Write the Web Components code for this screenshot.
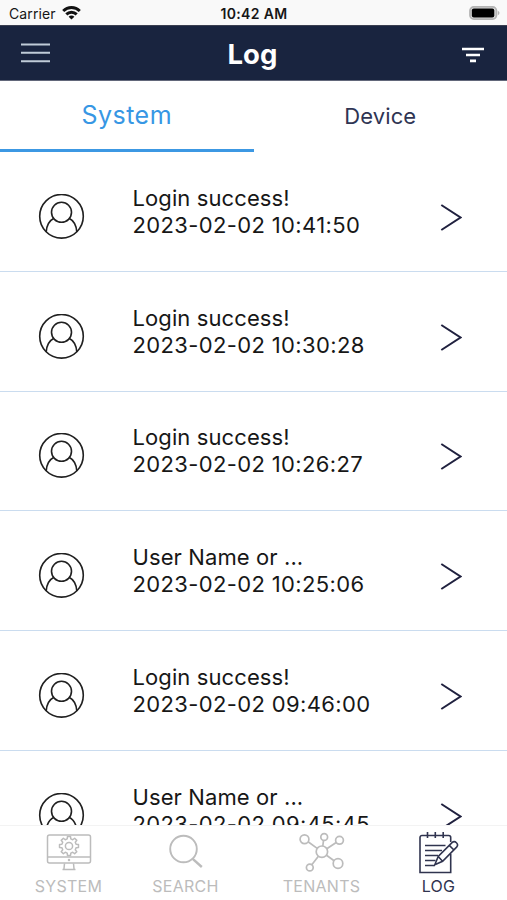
<!DOCTYPE html>
<html lang="en">
<head>
<meta charset="utf-8">
<title>Log</title>
<style>
html, body { margin: 0; height: 100%; overflow: hidden; background: #fff; font-family: Inter, "Liberation Sans", sans-serif; }
</style>
</head>
<body>
<log-app></log-app>
<script>
const define = (name, html, init) => customElements.define(name, class extends HTMLElement {
  constructor() {
    super();
    this.attachShadow({ mode: 'open' }).innerHTML = html;
  }
  connectedCallback() { if (init) init(this, this.shadowRoot); }
});

define('status-bar', `
<style>
:host { display: grid; grid-template-columns: 1fr auto 1fr; align-items: center; height: 25px; box-sizing: border-box; padding: 2px 7px 0 9px; background: #f9f9f9; color: #161616; font-size: 14px; line-height: 20px; }
.left { display: flex; align-items: center; gap: 6px; letter-spacing: .1px; }
.left svg { margin-top: -2px; }
.time { font-weight: 600; font-size: 14px; letter-spacing: .35px; margin-right: 1px; }
.right { display: flex; justify-content: flex-end; margin-top: -2px; }
svg { display: block; }
</style>
<div class="left"><span>Carrier</span>
<svg width="19" height="14" viewBox="0 0 19 14" fill="none" stroke="#111" stroke-width="2.900"><path d="M1.2 5C5.8.4 13.200.4 17.800 5"/><path d="M4.300 8.400c2.900-2.900 7.500-2.900 10.400 0"/><path d="M9.500 13.600 6.600 10.700c1.600-1.500 4.200-1.500 5.800 0z" fill="#111" stroke="none"/></svg></div>
<div class="time">10:42 AM</div>
<div class="right"><svg width="31" height="14" viewBox="0 0 31 14"><rect x="1" y=".9" width="26.400" height="12.200" rx="3.800" fill="#ddd" stroke="#b4b4b4" stroke-width="1.800"/><rect x="2.800" y="2.400" width="22.500" height="9.200" rx="2" fill="#000"/><path d="M28.800 4.800c2.200.8 2.200 3.600 0 4.400z" fill="#b4b4b4"/></svg></div>`);

define('nav-header', `
<style>
:host { display: grid; grid-template-columns: 1fr auto 1fr; align-items: center; height: 56px; box-sizing: border-box; padding: 0 23px 0 21px; background: #19243f; border-top: 1px solid #3a3f50; border-bottom: 1px solid #62677a; color: #fff; }
h1 { margin: 2px 0 0; font-size: 27.500px; line-height: 34px; font-weight: 700; letter-spacing: .1px; }
svg { display: block; }
.menu { margin-top: -1px; }
.filter { justify-self: end; margin-top: 4px; }
</style>
<svg class="menu" width="29" height="20" viewBox="0 0 29 20" stroke="#c0cbd8" stroke-width="1.900"><path d="M0 1.500h29M0 9.800h29M0 18.200h29"/></svg>
<h1><slot></slot></h1>
<svg class="filter" width="22" height="16" viewBox="0 0 22 16" stroke="#fff" stroke-width="2.700"><path d="M0 2h22M4 8h14M8 13.800h6"/></svg>`);

define('log-tab', `
<style>
:host { display: flex; flex: 1; box-sizing: border-box; height: 71px; justify-content: center; align-items: center; border-bottom: 3px solid transparent; font-size: 22px; color: #2f3453; letter-spacing: .1px; }
:host([active]) { border-color: #3c98e3; color: #3797e4; font-size: 25px; letter-spacing: .5px; }
span { line-height: 30px; padding-top: 2px; }
:host([active]) span { padding-top: 0; }
</style><span><slot></slot></span>`);

define('log-row', `
<style>
:host { display: grid; grid-template-columns: 132.500px 1fr 67px; height: 119.800px; flex: none; box-sizing: border-box; align-items: start; border-bottom: 1.500px solid #cadcef; color: #171717; }
.avatar { margin: 41.800px 0 0 38px; }
.text { padding-top: 32.800px; font-size: 22px; line-height: 27px; white-space: nowrap; }
.msg { letter-spacing: .1px; }
.when { letter-spacing: .36px; }
.arrow { margin-top: 51.800px; }
svg { display: block; }
</style>
<svg class="avatar" width="47" height="47" viewBox="0 0 47 47" fill="none" stroke="#202020" stroke-width="1.600"><circle cx="23.500" cy="22.300" r="21.800"/><circle cx="23.500" cy="18.300" r="10"/><path d="M8.200 38c.4-6.500 3-11.400 7.800-13.800M38.800 38c-.4-6.500-3-11.400-7.800-13.800"/></svg>
<div class="text"><div class="msg"></div><div class="when"></div></div>
<svg class="arrow" width="22" height="28" viewBox="0 0 22 28" fill="none" stroke="#20213f" stroke-width="2"><path d="M1.300 1 20.500 13.500 1.300 26"/></svg>`,
(el, root) => {
  root.querySelector('.msg').textContent = el.getAttribute('message');
  root.querySelector('.when').textContent = el.getAttribute('time');
});

define('nav-item', `
<style>
:host { display: flex; flex-direction: column; align-items: center; width: 117px; color: #bcbcbc; font-size: 16px; line-height: 20px; letter-spacing: .25px; }
:host([active]) { color: #30344f; }
.icon { height: 44px; display: flex; align-items: flex-start; padding-top: 6px; }
</style>
<div class="icon"><slot name="icon"></slot></div><div class="label"><slot></slot></div>`);

define('bottom-nav', `
<style>
:host { display: grid; grid-template-columns: 137px 97px 175px 59px; height: 75px; box-sizing: border-box; background: #fff; border-top: 1px solid #f3f3f3; justify-content: start; justify-items: center; }
svg { display: block; fill: none; stroke: currentColor; }
</style>
<nav-item><svg slot="icon" width="46" height="40" viewBox="0 0 46 40" stroke-width="1.500"><rect x="1.500" y="3" width="43" height="28" rx="2"/><path d="M1.500 25h43M18.500 31.500l-.6 6M27.500 31.500l.6 6M16.500 37.500h13"/><path id="gear" stroke-linejoin="round"/><circle cx="23" cy="14" r="3.600"/><circle cx="23" cy="28" r=".5"/></svg>SYSTEM</nav-item>
<nav-item><svg slot="icon" width="34" height="40" viewBox="0 0 34 40" stroke-width="1.900"><circle cx="14.500" cy="17" r="13.300"/><path d="M23.700 26.800 32.800 35" stroke-width="2.400"/></svg>SEARCH</nav-item>
<nav-item><svg slot="icon" width="46" height="40" viewBox="0 0 46 40" stroke-width="1.700"><circle cx="22.900" cy="19.700" r="5.700"/><circle cx="5.500" cy="7.300" r="4.400"/><circle cx="25.200" cy="5" r="3.400"/><circle cx="40.500" cy="8.300" r="3.900"/><circle cx="39" cy="31.500" r="4.800"/><circle cx="10.800" cy="35.500" r="3.400"/><path d="M9.100 9.800 18.200 16.400M24.500 8.400 23.800 14M37.200 10.500 27.800 16.800M27.500 23.200 35.100 28.700M19.400 24.200 12.800 32.700"/></svg>TENANTS</nav-item>
<nav-item active><svg slot="icon" width="40" height="42" viewBox="0 0 40 42" stroke-width="1.600"><path d="M31.700 10V5.500a2 2 0 0 0-2-2h-26.700a2 2 0 0 0-2 2V40.500h30.700V22M8.500 0v6M16.300 0v6M24.200 0v6M6 13.500h20.500M6 18.500h17M6 23.500h13M6 28.500h10.500M6 33.500h10"/><path d="M15.800 32.800 19.200 24.500 33 10.700c3-2.700 7.300 1.400 4.600 4.400L23.600 29.300zM30.300 13.400l4.600 4.600M19.200 24.500l4.400 4.800" fill="#fff"/></svg>LOG</nav-item>`,
(el, root) => {
  const pts = [];
  for (let i = 0; i < 8; i++) {
    for (const [o, r] of [[-.25, 7.300], [-.16, 9.600], [.16, 9.600], [.25, 7.300]]) {
      const a = i * Math.PI / 4 + o;
      pts.push((23 + r * Math.sin(a)).toFixed(2) + ' ' + (14 - r * Math.cos(a)).toFixed(2));
    }
  }
  root.querySelector('#gear').setAttribute('d', 'M' + pts.join('L') + 'Z');
});

define('log-app', `
<style>
:host { display: flex; flex-direction: column; height: 900px; width: 507px; overflow: hidden; }
.tabs { display: flex; flex: none; }
.list { flex: 1; min-height: 0; overflow: hidden; display: flex; flex-direction: column; }
status-bar, nav-header, bottom-nav { flex: none; }
</style>
<status-bar></status-bar>
<nav-header>Log</nav-header>
<div class="tabs"><log-tab active>System</log-tab><log-tab>Device</log-tab></div>
<div class="list">
<log-row message="Login success!" time="2023-02-02 10:41:50"></log-row>
<log-row message="Login success!" time="2023-02-02 10:30:28"></log-row>
<log-row message="Login success!" time="2023-02-02 10:26:27"></log-row>
<log-row message="User Name or ..." time="2023-02-02 10:25:06"></log-row>
<log-row message="Login success!" time="2023-02-02 09:46:00"></log-row>
<log-row message="User Name or ..." time="2023-02-02 09:45:45"></log-row>
</div>
<bottom-nav></bottom-nav>`);
</script>
</body>
</html>
